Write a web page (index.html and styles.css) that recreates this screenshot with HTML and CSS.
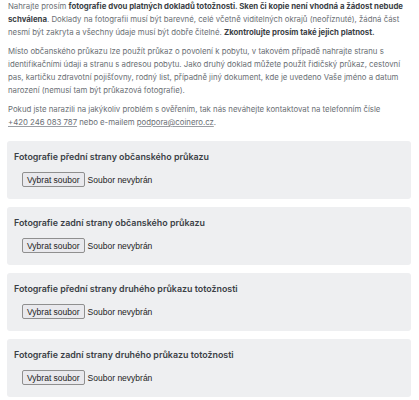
FILE: index.html
```html
<!DOCTYPE html>
<html lang="cs">
<head>
    <meta charset="UTF-8">
    <meta name="viewport" content="width=device-width, initial-scale=1.0">
    <title>Ověření totožnosti</title>
    <link rel="stylesheet" href="styles.css">
</head>
<body>
    <div class="container">
        <p>Nahrajte prosím <strong>fotografie dvou platných dokladů totožnosti. Sken či kopie není vhodná a žádost nebude schválena</strong>. Doklady na fotografii musí být barevné, celé včetně viditelných okrajů (neoříznuté), žádná část nesmí být zakryta a všechny údaje musí být dobře čitelné. <strong>Zkontrolujte prosím také jejich platnost.</strong></p>
        <p>Místo občanského průkazu lze použít průkaz o povolení k pobytu, v takovém případě nahrajte stranu s identifikačními údaji a stranu s adresou pobytu. Jako druhý doklad můžete použít řidičský průkaz, cestovní pas, kartičku zdravotní pojišťovny, rodný list, případně jiný dokument, kde je uvedeno Vaše jméno a datum narození (nemusí tam být průkazová fotografie).</p>
        <p>Pokud jste narazili na jakýkoliv problém s ověřením, tak nás neváhejte kontaktovat na telefonním čísle <a href="#">+420 246 083 787</a> nebo e-mailem <a href="#">podpora@coinero.cz</a>.</p>

        <div class="upload">
            <label for="f1">Fotografie přední strany občanského průkazu</label>
            <div class="file-row"><span class="file-btn">Vybrat soubor</span><span class="file-name">Soubor nevybrán</span></div>
        </div>
        <div class="upload">
            <label for="f2">Fotografie zadní strany občanského průkazu</label>
            <div class="file-row"><span class="file-btn">Vybrat soubor</span><span class="file-name">Soubor nevybrán</span></div>
        </div>
        <div class="upload">
            <label for="f3">Fotografie přední strany druhého průkazu totožnosti</label>
            <div class="file-row"><span class="file-btn">Vybrat soubor</span><span class="file-name">Soubor nevybrán</span></div>
        </div>
        <div class="upload">
            <label for="f4">Fotografie zadní strany druhého průkazu totožnosti</label>
            <div class="file-row"><span class="file-btn">Vybrat soubor</span><span class="file-name">Soubor nevybrán</span></div>
        </div>
    </div>
</body>
</html>
```

FILE: styles.css
```css
body {
    font-family: Inter, 'Noto Sans', sans-serif;
    background: #fff;
    color: #6b6f75;
    margin: 0;
    padding: 0;
}
.container {
    padding: 0 8px 0 8px;
}
p {
    margin: 0 0 6px 0;
    font-size: 7.8px;
    line-height: 13px;
}
strong {
    color: #3b3f46;
    font-weight: 700;
}
a {
    color: #6b6f75;
    white-space: nowrap;
    text-decoration: underline;
    text-decoration-color: #9a9ea4;
}
.container p:last-of-type {
    margin-bottom: 12px;
}
.upload {
    background: #eeeff1;
    border-radius: 3px;
    padding: 9px 7px 12px 7px;
    margin: 0 0 8px -1px;
}
.upload label {
    display: block;
    color: #3b3f46;
    font-size: 8.9px;
    font-weight: 600;
    line-height: 13px;
    margin-bottom: 9px;
}
.file-row {
    display: flex;
    align-items: center;
    padding-left: 8px;
    font-family: 'Liberation Sans', Arial, sans-serif;
    font-size: 8.5px;
    color: #222;
}
.file-btn {
    display: inline-block;
    height: 15px;
    line-height: 14px;
    padding: 0 4px;
    box-sizing: border-box;
    border: 1px solid #8f8f8f;
    border-radius: 2px;
    background: #e9e9ed;
    color: #222;
    margin-right: 3px;
}
```
